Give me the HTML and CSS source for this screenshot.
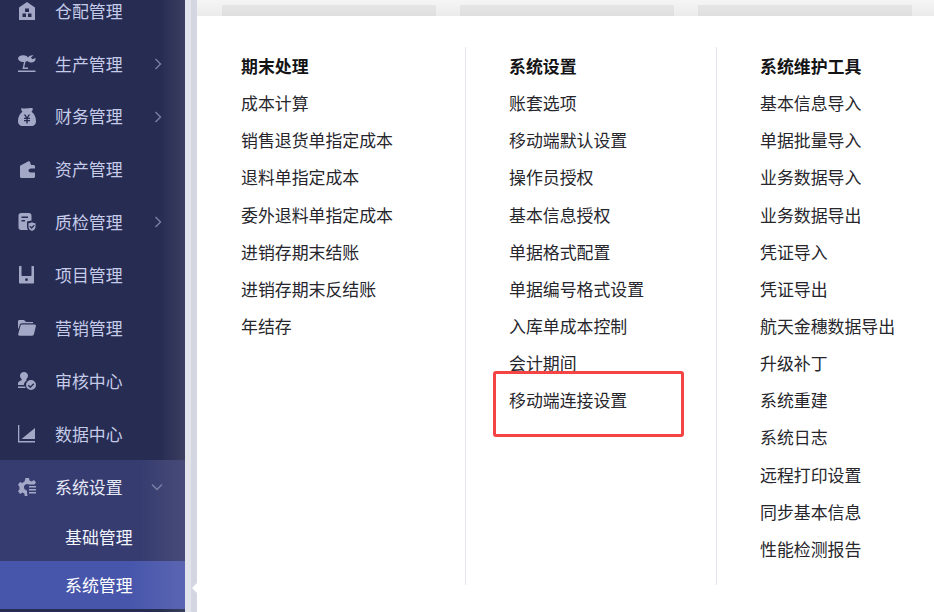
FILE: index.html
```html
<!DOCTYPE html>
<html lang="zh-CN">
<head>
<meta charset="utf-8">
<title>系统管理</title>
<link rel="stylesheet" href="styles.css">
</head>
<body>
<div class="app">
  <nav class="sidebar">
    <ul class="nav">
      <li class="row row-first"><svg class="icon" viewBox="0 0 18 18"><path fill-rule="evenodd" d="M9 0l8 5.500V18H1V5.500zM7 6.500h4v3.500H7zM4.500 11.500h3.500v3.500H4.500zM10 11.500h3.500v3.500H10z"/></svg><span class="label">仓配管理</span></li>
      <li class="row"><svg class="icon" viewBox="0 0 18 18"><path d="M0 3.500C.5 1 3 0 5.500.2 7.500.3 9 1 10 2.500c.7-1.500 3-2.700 5.500-2.200L13 2.500l1.200 1.700L17.500 3c.5 2.800-2 5-5 4.500-1.300-.2-2.300-.7-3-1.500L7.500 6.800 6.200 12.500H10V14H4.500l1.500-7C3 7.500.5 6 0 3.500zM0 15.500h17.500V17H0z"/></svg><span class="label">生产管理</span><svg class="chev" viewBox="0 0 8 12"><path d="M1.500 1l5 5-5 5"/></svg></li>
      <li class="row"><svg class="icon" viewBox="0 0 18 18"><path fill-rule="evenodd" d="M3.500 0c1.500.6 3.500.6 5.500.3s4-.3 5.500-.3c.6 1.200 0 2.800-1 3.800C16 5.500 18 9 18 13c0 3.500-2 5-4.500 5h-9C2 18 0 16.500 0 13c0-4 2-7.500 4.500-9.200-1-1-1.600-2.600-1-3.800zM5.800 6.500L8 9.700H6V11h2.300v1H6v1.300h2.300V15.500h1.400v-2.200H12V12H9.700v-1H12V9.700h-2l2.200-3.200h-1.600L9 9 7.400 6.500z"/></svg><span class="label">财务管理</span><svg class="chev" viewBox="0 0 8 12"><path d="M1.500 1l5 5-5 5"/></svg></li>
      <li class="row"><svg class="icon" viewBox="0 0 18 18"><path fill-rule="evenodd" d="M2.500 4.500L10 .5c1-.4 2 .2 2.300 1.200L13 4h2.500c.8 0 1.500.7 1.500 1.500V7.500H13c-1.400 0-2.500 1-2.500 2s1.100 2 2.500 2h4v4c0 .8-.7 1.500-1.500 1.500h-12C2.700 17 2 16.300 2 15.500V5c0-.2.200-.4.500-.5z"/></svg><span class="label">资产管理</span></li>
      <li class="row"><svg class="icon" viewBox="0 0 18 18"><path fill-rule="evenodd" d="M3 0h8c1.400 0 2.500 1.100 2.500 2.500V7.500c-1.500.5-3 .8-4.500 1V14c0 1 .3 2 1 3H3c-1.400 0-2.500-1.100-2.500-2.500v-12C.5 1.100 1.600 0 3 0zM3.500 3.500V5H10V3.500zM3.500 7v1.500H7V7z"/><path fill-rule="evenodd" d="M10.500 10.300c1.300 0 2.500-.3 3.500-1 1 .7 2.200 1 3.500 1V14c0 2-1.700 3.300-3.500 4-1.800-.7-3.500-2-3.500-4zM12.200 12.700l-.9.900 2.300 2.300 3.200-3.300-.9-.8-2.300 2.300z"/></svg><span class="label">质检管理</span><svg class="chev" viewBox="0 0 8 12"><path d="M1.500 1l5 5-5 5"/></svg></li>
      <li class="row"><svg class="icon" viewBox="0 0 18 18"><path fill-rule="evenodd" d="M2 0h13c.6 0 1 .4 1 1v15.500c0 .6-.4 1-1 1H2c-.6 0-1-.4-1-1V1c0-.6.400-1 1-1zM3.500 0v9c0 .6.400 1 1 1h8c.6 0 1-.4 1-1V0zM8.500 12.300a1.400 1.400 0 100 2.800 1.400 1.400 0 000-2.800z"/></svg><span class="label">项目管理</span></li>
      <li class="row"><svg class="icon" viewBox="0 0 18 18"><path d="M0 2.500C0 1.700.6 1 1.500 1H6l2 2h7v1.300H4C2.800 4.300 2 5 1.700 6L.6 9.500H0z"/><path d="M4 5.500h12.500c1 0 1.700.9 1.400 1.800l-2 8c-.2.800-.9 1.400-1.700 1.400H1.500C.5 16.700-.1 15.800.2 14.900l2.300-8.200C2.700 6 3.300 5.500 4 5.500z"/></svg><span class="label">营销管理</span></li>
      <li class="row"><svg class="icon" viewBox="0 0 18 18"><path d="M6 0c2.500 0 4 1.800 4 3.800 0 1.500-.8 2.700-1.800 3.500l.5 1.200C7 9.500 6 11 5.800 13H0v-1.500C0 9.500 2 9 3.500 8.200l.3-1C2.700 6.400 2 5.200 2 3.800 2 1.800 3.500 0 6 0zM0 14.500h7l.8 1.500H0z"/><path fill-rule="evenodd" d="M13 8a5 5 0 110 10 5 5 0 010-10zM10.800 12.800l-1 1 2.500 2.400 4-4-1-1-3 3z"/></svg><span class="label">审核中心</span></li>
      <li class="row"><svg class="icon" viewBox="0 0 18 18"><path d="M0 0h1.300v16H17v1.500H0z"/><path d="M3.500 14L17 3v11z"/></svg><span class="label">数据中心</span></li>
      <li class="row row-open"><svg class="icon" viewBox="0 0 18 18"><path d="M7.500 0h3.500l.5 2.500 2.200.9L16 2l2 2.500-1.500 2H11c-1.700-1.300-4.500-.5-5 2-.4 2 1 3.800 3 4V15l.5 3H6.800l-.5-2.500-2-.9L2.200 16 0 13.300l1.500-2.100-.2-2.400L0 6.700 2 4l2.300 1L6.500 3.500z"/><path d="M11 8h7v1.500h-7zM11 11h7v1.500h-7zM11 14h7v1.500h-7z"/></svg><span class="label">系统设置</span><svg class="chev-down" viewBox="0 0 12 8"><path d="M1 1.500l5 5 5-5"/></svg></li>
      <li class="sub sub-open">基础管理</li>
      <li class="sub sub-active">系统管理</li>
    </ul>
  </nav>
  <div class="gutter"></div>
  <main class="main">
    <div class="band">
      <div class="ghost"></div>
      <div class="ghost"></div>
      <div class="ghost"></div>
    </div>
    <section class="panel">
      <div class="col col-a">
        <h3>期末处理</h3>
        <a>成本计算</a>
        <a>销售退货单指定成本</a>
        <a>退料单指定成本</a>
        <a>委外退料单指定成本</a>
        <a>进销存期末结账</a>
        <a>进销存期末反结账</a>
        <a>年结存</a>
      </div>
      <div class="col col-b">
        <h3>系统设置</h3>
        <a>账套选项</a>
        <a>移动端默认设置</a>
        <a>操作员授权</a>
        <a>基本信息授权</a>
        <a>单据格式配置</a>
        <a>单据编号格式设置</a>
        <a>入库单成本控制</a>
        <a>会计期间</a>
        <a>移动端连接设置</a>
      </div>
      <div class="col col-c">
        <h3>系统维护工具</h3>
        <a>基本信息导入</a>
        <a>单据批量导入</a>
        <a>业务数据导入</a>
        <a>业务数据导出</a>
        <a>凭证导入</a>
        <a>凭证导出</a>
        <a>航天金穗数据导出</a>
        <a>升级补丁</a>
        <a>系统重建</a>
        <a>系统日志</a>
        <a>远程打印设置</a>
        <a>同步基本信息</a>
        <a>性能检测报告</a>
      </div>
    </section>
  </main>
</div>
<div class="pointer"></div>
<div class="annotation"></div>
</body>
</html>
```

FILE: styles.css
```css
* { box-sizing: border-box; }
html, body { margin: 0; padding: 0; height: 100%; overflow: hidden; background: #fff; }
body { font-family: "Noto Sans CJK SC", "Noto Sans", sans-serif; font-size: 16.9px; }
.app { display: flex; height: 612px; }

.sidebar {
  width: 185px; flex: none; overflow: hidden;
  background: linear-gradient(90deg, #272c52 0, #272c52 160px, #3b4061 185px);
}
.nav { list-style: none; margin: 0; padding: 0; }
.row {
  display: flex; align-items: center; height: 52.9px;
  padding-left: 18px; color: #c5cbe8;
}
.row-first { height: 37.3px; padding-bottom: 15.4px; }
.icon { width: 18px; height: 18px; flex: none; fill: #a3a8c7; }
.label { margin: -.4px 0 0 19px; width: 85px; line-height: 20px; white-space: nowrap; }
.chev { width: 8px; height: 12px; margin-left: 14px; fill: none; stroke: #7c81a6; stroke-width: 1.4; }
.chev-down { width: 12px; height: 8px; margin-left: 11px; fill: none; stroke: #7c81a6; stroke-width: 1.4; }
.row-open {
  color: #e6e9f7;
  background: linear-gradient(90deg, #363c70 0, #363c70 140px, #474b78 185px);
}
.sub { height: 48px; line-height: 48px; padding-left: 65px; color: #f2f4fc; }
.sub-open { background: linear-gradient(90deg, #363c70 0, #363c70 140px, #474b78 185px); }
.sub-active { color: #fff; background: linear-gradient(90deg, #4756ab 0, #4756ab 130px, #5b66b2 185px); }

.gutter { width: 12px; flex: none; background: linear-gradient(90deg, #e2e4eb 0, #e2e4eb 6px, #d4d7e1 6px, #d4d7e1 100%); }

.main { flex: 1; display: flex; flex-direction: column; min-width: 0; }
.band {
  height: 16px; flex: none; display: flex; gap: 24px;
  padding: 5px 0 0 25px;
  background: linear-gradient(#f5f5f5, #ebebeb);
}
.ghost { width: 214px; height: 11px; background: linear-gradient(#e5e5e5, #dfdfdf); }
.panel { flex: 1; background: #fff; display: flex; padding: 31px 0 0; align-items: flex-start; }
.col { height: 538px; display: flex; flex-direction: column; }
.col-a { width: 269px; padding-left: 44px; border-right: 1px solid #e3e6ee; }
.col-b { width: 251px; padding-left: 43px; border-right: 1px solid #e3e6ee; }
.col-c { flex: 1; padding-left: 43px; }
.col h3, .col a {
  margin: 0; height: 37.15px; line-height: 37.15px; font-size: 16.9px; white-space: nowrap; color: #26262c;
}
.col h3 { font-weight: 700; color: #141416; }

.pointer {
  position: absolute; left: 192px; top: 583px; width: 0; height: 0;
  border-style: solid; border-width: 5px 5px 5px 0;
  border-color: transparent #fff transparent transparent;
}
.annotation {
  position: absolute; left: 493px; top: 371px; width: 191px; height: 66px;
  border: 3px solid #f54444; border-radius: 3px;
}
```
